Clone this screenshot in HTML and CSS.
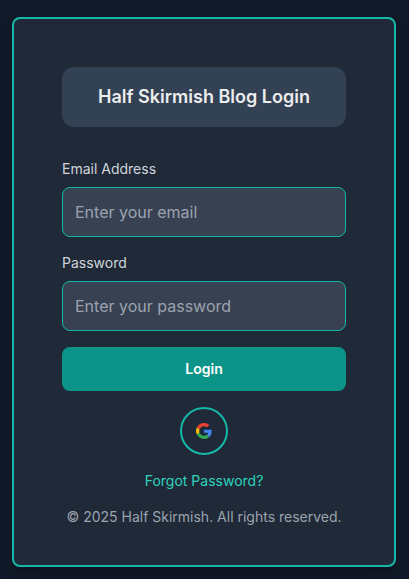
FILE: index.html
```html
<!DOCTYPE html>
<html lang="en">
<head>
<meta charset="utf-8">
<title>Half Skirmish Blog Login</title>
<link rel="stylesheet" href="styles.css">
</head>
<body>
<main class="card">
  <h1 class="title">Half Skirmish Blog Login</h1>
  <form class="form">
    <label class="label" for="email">Email Address</label>
    <input class="input" id="email" type="email" placeholder="Enter your email">
    <label class="label" for="password">Password</label>
    <input class="input" id="password" type="password" placeholder="Enter your password">
    <button class="submit" type="button">Login</button>
  </form>
  <button class="google" type="button" aria-label="Google">
    <svg width="16" height="16" viewBox="0 0 48 48">
      <path fill="#EA4335" d="M24 9.5c3.54 0 6.71 1.22 9.21 3.6l6.85-6.85C35.9 2.38 30.47 0 24 0 14.62 0 6.51 5.38 2.56 13.22l7.98 6.19C12.43 13.72 17.74 9.5 24 9.5z"/>
      <path fill="#4285F4" d="M46.98 24.55c0-1.57-.15-3.09-.38-4.55H24v9.02h12.94c-.58 2.96-2.26 5.48-4.78 7.18l7.73 6c4.51-4.18 7.09-10.36 7.09-17.65z"/>
      <path fill="#FBBC05" d="M10.53 28.59c-.48-1.45-.76-2.99-.76-4.59s.27-3.14.76-4.59l-7.98-6.19C.92 16.46 0 20.12 0 24s.92 7.54 2.56 10.78l7.97-6.19z"/>
      <path fill="#34A853" d="M24 48c6.48 0 11.93-2.13 15.89-5.81l-7.73-6c-2.15 1.45-4.92 2.3-8.16 2.3-6.26 0-11.57-4.22-13.47-9.91l-7.98 6.19C6.51 42.62 14.62 48 24 48z"/>
    </svg>
  </button>
  <a class="forgot">Forgot Password?</a>
  <p class="copyright">© 2025 Half Skirmish. All rights reserved.</p>
</main>
</body>
</html>
```
FILE: styles.css
```css
* { box-sizing: border-box; }
body {
  margin: 0;
  height: 579px;
  padding: 17px 13px 12px 12px;
  overflow: hidden;
  background: #111827;
  font-family: Inter, sans-serif;
}
.card {
  height: 550px;
  padding: 48px;
  border: 2px solid #14b8a6;
  border-radius: 8px;
  background: #1f2937;
  box-shadow: 0 10px 15px -3px rgba(0, 0, 0, 0.1), 0 4px 6px -4px rgba(0, 0, 0, 0.1);
  display: flex;
  flex-direction: column;
  align-items: center;
}
.title {
  width: 100%;
  height: 60px;
  margin: 0 0 32px;
  border-radius: 12px;
  background: #334155;
  color: #ececec;
  font-size: 18px;
  font-weight: 600;
  line-height: 60px;
  text-align: center;
}
.form { width: 100%; display: flex; flex-direction: column; }
.label {
  margin-bottom: 8px;
  color: #d1d5db;
  font-size: 14px;
  line-height: 20px;
}
.input {
  width: 100%;
  height: 50px;
  margin-bottom: 16px;
  padding: 12px;
  border: 1px solid #14b8a6;
  border-radius: 8px;
  outline: 0;
  background: #374151;
  color: #fff;
  font: 16px/24px Inter, sans-serif;
}
.input::placeholder { color: #9ca3af; }
.submit {
  height: 44px;
  padding: 0;
  border: 0;
  border-radius: 8px;
  background: #0d9488;
  color: #fff;
  font: 600 14px/20px Inter, sans-serif;
}
.google {
  width: 48px;
  height: 48px;
  margin: 16px 0;
  padding: 0;
  flex: none;
  display: grid;
  place-items: center;
  border: 2px solid #14b8a6;
  border-radius: 50%;
  background: #1f2937;
}
.forgot { color: #2dd4bf; font-size: 14px; line-height: 20px; }
.copyright {
  margin: 16px 0 0;
  color: #9ca3af;
  font-size: 14px;
  line-height: 20px;
  white-space: nowrap;
}
```
